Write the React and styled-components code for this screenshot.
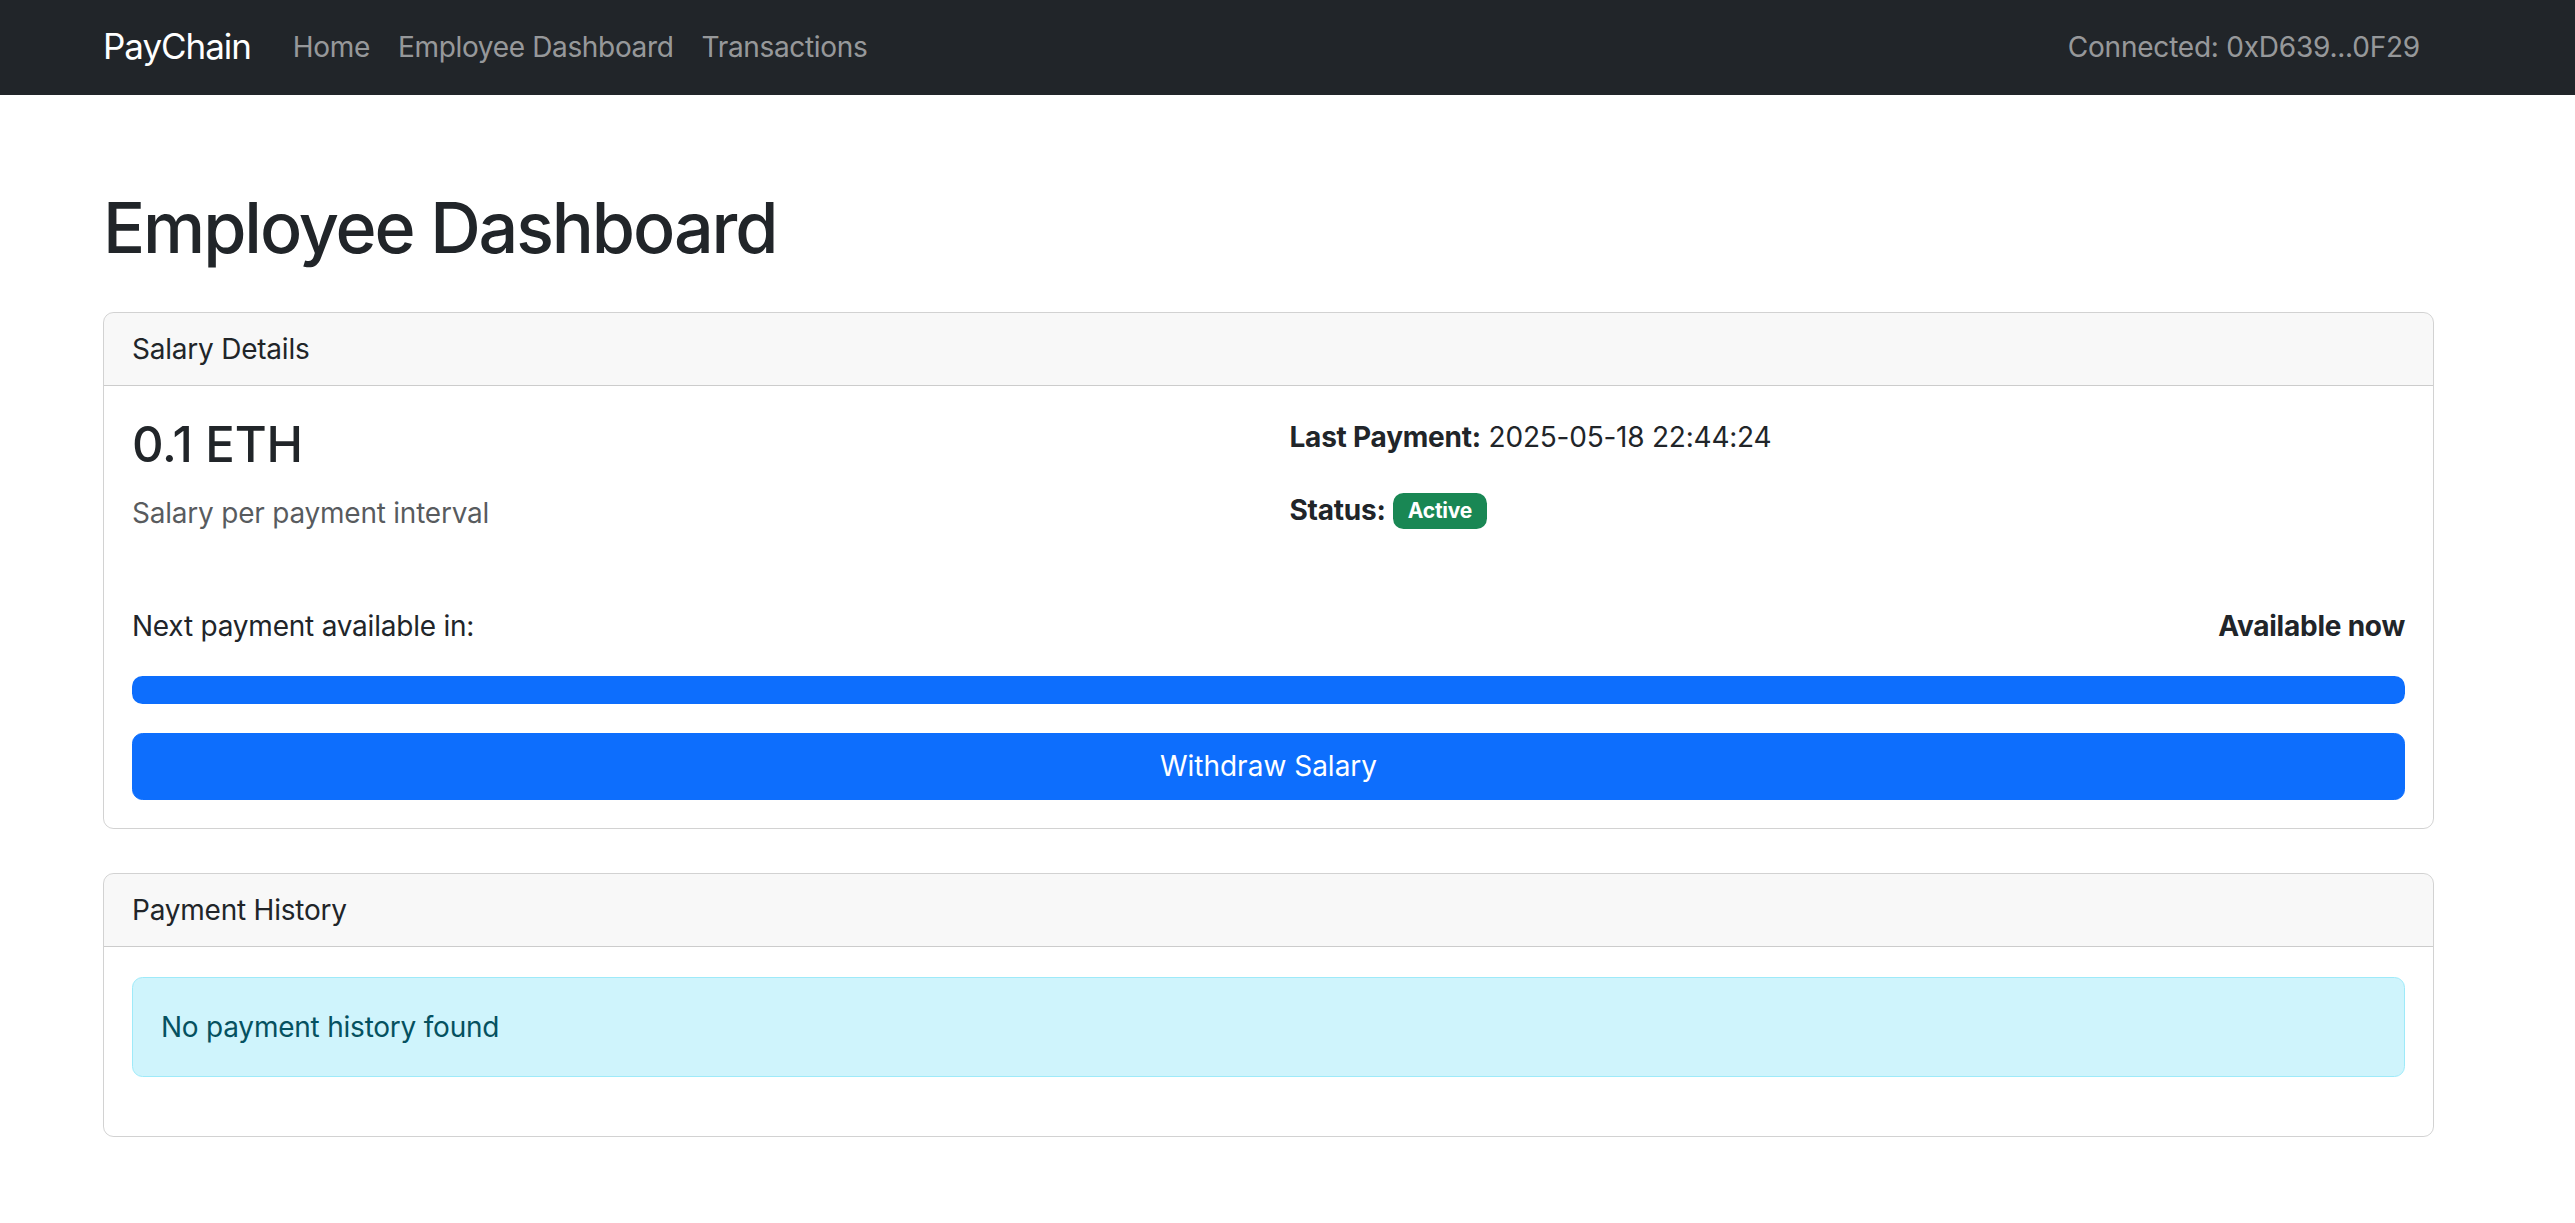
import React from "react";
import styled, { createGlobalStyle } from "styled-components";

const Global = createGlobalStyle`
  html, body { margin: 0; padding: 0; background: #fff; }
  body {
    font-family: Inter, "Noto Sans", "Liberation Sans", sans-serif;
    font-size: 28px;
    line-height: 1.5;
    letter-spacing: -0.008em;
    color: #212529;
  }
  * { box-sizing: border-box; }
`;

const Navbar = styled.nav`
  height: 95px;
  background: #212529;
  display: flex;
  align-items: center;
  padding: 0 141px 2px 103px;
`;

const Brand = styled.a`
  font-size: 35px;
  color: #fff;
  margin-right: 28px;
  line-height: 1.5;
  letter-spacing: -0.03em;
  text-decoration: none;
`;

const NavLinks = styled.div`
  display: flex;
  flex: 1;
`;

const NavLink = styled.a`
  color: rgba(255, 255, 255, 0.55);
  padding: 14px 14px;
  letter-spacing: -0.012em;
  text-decoration: none;
`;

const NavText = styled.span`
  color: rgba(255, 255, 255, 0.55);
  padding-right: 14px;
`;

const Main = styled.main`
  padding: 91px 141px 60px 103px;
`;

const Title = styled.h1`
  font-size: 70px;
  font-weight: 500;
  line-height: 1.2;
  letter-spacing: -0.03em;
  margin: 0 0 42px;
`;

const Card = styled.section`
  border: 1px solid rgba(0, 0, 0, 0.175);
  border-radius: 10.5px;
  margin-bottom: 44px;
  overflow: hidden;
`;

const CardHeader = styled.div`
  background: rgba(33, 37, 41, 0.03);
  border-bottom: 1px solid rgba(0, 0, 0, 0.175);
  padding: 15px 28px 15px;
`;

const CardBody = styled.div`
  padding: 30px 28px ${(p) => (p.$extra ? 31 : 28)}px;
`;

const Grid = styled.div`
  display: grid;
  grid-template-columns: 1fr 1fr;
  column-gap: 42px;
  margin-bottom: 40px;
`;

const Amount = styled.h3`
  font-size: 49px;
  font-weight: 500;
  line-height: 1.2;
  margin: 0 0 17px;
`;

const Text = styled.p`
  margin: 0 0 ${(p) => (p.$last ? 0 : 31)}px;
  color: ${(p) => (p.$muted ? "rgba(33, 37, 41, 0.75)" : "#212529")};
`;

const Strong = styled.strong`
  font-weight: 700;
`;

const Badge = styled.span`
  display: inline-block;
  background: #198754;
  color: #fff;
  font-size: 21px;
  font-weight: 700;
  line-height: 1;
  padding: 7.5px 14.5px;
  border-radius: 10.5px;
  vertical-align: 2px;
`;

const SpaceRow = styled.div`
  display: flex;
  justify-content: space-between;
  margin-bottom: 29px;
`;

const Progress = styled.div`
  height: 28px;
  background: #e9ecef;
  border-radius: 10.5px;
  overflow: hidden;
  margin-bottom: 29px;
`;

const ProgressFill = styled.div`
  height: 100%;
  background: #0d6efd;
`;

const Button = styled.button`
  display: block;
  width: 100%;
  height: 67px;
  background: #0d6efd;
  color: #fff;
  border: 1px solid #0d6efd;
  border-radius: 10.5px;
  font: inherit;
  cursor: pointer;
`;

const Alert = styled.div`
  background: #cff4fc;
  border: 1px solid #9eeaf9;
  color: #055160;
  border-radius: 10.5px;
  padding: 28px 28px;
  margin-bottom: 28px;
`;

export default function App() {
  const progress = 100;
  return (
    <>
      <Global />
      <Navbar>
        <Brand href="#">PayChain</Brand>
        <NavLinks>
          <NavLink href="#">Home</NavLink>
          <NavLink href="#">Employee Dashboard</NavLink>
          <NavLink href="#">Transactions</NavLink>
        </NavLinks>
        <NavText>Connected: 0xD639...0F29</NavText>
      </Navbar>
      <Main>
        <Title>Employee Dashboard</Title>
        <Card>
          <CardHeader>Salary Details</CardHeader>
          <CardBody>
            <Grid>
              <div>
                <Amount>0.1 ETH</Amount>
                <Text $muted>Salary per payment interval</Text>
              </div>
              <div>
                <Text>
                  <Strong>Last Payment:</Strong> 2025-05-18 22:44:24
                </Text>
                <Text $last>
                  <Strong>Status:</Strong> <Badge>Active</Badge>
                </Text>
              </div>
            </Grid>
            <SpaceRow>
              <span>Next payment available in:</span>
              <Strong>Available now</Strong>
            </SpaceRow>
            <Progress>
              <ProgressFill style={{ width: `${progress}%` }} />
            </Progress>
            <Button>Withdraw Salary</Button>
          </CardBody>
        </Card>
        <Card>
          <CardHeader>Payment History</CardHeader>
          <CardBody $extra>
            <Alert>No payment history found</Alert>
          </CardBody>
        </Card>
      </Main>
    </>
  );
}
